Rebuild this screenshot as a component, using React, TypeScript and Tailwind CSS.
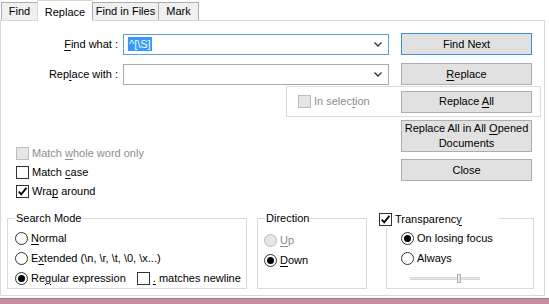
import React from 'react';

const U = ({ children }: { children: React.ReactNode }) => (
  <span className="underline underline-offset-[2px] decoration-[1px]">{children}</span>
);

function Check({ checked, disabled }: { checked?: boolean; disabled?: boolean }) {
  return (
    <span
      className={`w-[13px] h-[13px] border flex items-center justify-center shrink-0 ${
        disabled ? 'border-[#bcbcbc] bg-[#e6e6e6]' : 'border-[#333333] bg-white'
      }`}
    >
      {checked && (
        <svg width="11" height="11" viewBox="0 0 11 11">
          <path d="M1.8 5.6 L4.2 8.3 L9.4 1.9" fill="none" stroke="#000" strokeWidth="1.8" />
        </svg>
      )}
    </span>
  );
}

function Radio({ checked, disabled }: { checked?: boolean; disabled?: boolean }) {
  return (
    <span
      className={`w-[13px] h-[13px] rounded-full border flex items-center justify-center shrink-0 ${
        disabled ? 'border-[#bcbcbc] bg-[#e6e6e6]' : 'border-[#333333] bg-white'
      }`}
    >
      {checked && <span className="w-[7px] h-[7px] rounded-full bg-black" />}
    </span>
  );
}

function Btn({ children, primary, h = 'h-[22px]' }: { children: React.ReactNode; primary?: boolean; h?: string }) {
  return (
    <div
      className={`w-[131px] ${h} border ${
        primary ? 'border-[#3d8fd6]' : 'border-[#adadad]'
      } bg-[#e1e1e1] flex items-center justify-center text-center leading-[15px]`}
    >
      <div>{children}</div>
    </div>
  );
}

function Combo({ focused, children }: { focused?: boolean; children?: React.ReactNode }) {
  return (
    <div
      className={`w-[266px] h-[21px] border ${
        focused ? 'border-[#5a9de0]' : 'border-[#a9a9a9]'
      } bg-white flex items-center pl-[4px] pr-[6px]`}
    >
      <div className="flex-1">{children}</div>
      <svg width="8" height="5" viewBox="0 0 8 5">
        <path d="M0.5 0.5 L4 4 L7.5 0.5" fill="none" stroke="#333" strokeWidth="1.3" />
      </svg>
    </div>
  );
}

function Group({ title, className, children }: { title?: string; className: string; children: React.ReactNode }) {
  return (
    <div className={`relative border border-[#dcdcdc] h-[71px] ${className}`}>
      {title && <span className="absolute -top-[8px] left-[7px] bg-white px-[1px] leading-[14px]">{title}</span>}
      {children}
    </div>
  );
}

const Row = ({ children, className = '' }: { children: React.ReactNode; className?: string }) => (
  <div className={`h-[20px] flex items-center gap-[3px] ${className}`}>{children}</div>
);

export default function App() {
  return (
    <div
      className="w-[549px] h-[304px] bg-white flex flex-col overflow-hidden text-[11px] text-black"
      style={{ fontFamily: '"Liberation Sans", Arial, sans-serif' }}
    >
      {/* Tabs */}
      <div className="h-[20px] flex items-end pl-[1px] relative z-10">
        <div className="w-[37px] h-[18px] border border-b-0 border-[#acacac] bg-[#f0f0f0] flex items-center justify-center">Find</div>
        <div className="w-[56px] h-[21px] -mb-px -ml-px border border-b-0 border-[#d9d9d9] bg-white flex items-start pt-[3px] justify-center">Replace</div>
        <div className="w-[67px] h-[18px] -ml-px border border-b-0 border-[#acacac] bg-[#f0f0f0] flex items-center justify-center">Find in Files</div>
        <div className="w-[41px] h-[18px] -ml-px border border-b-0 border-[#acacac] bg-[#f0f0f0] flex items-center justify-center">Mark</div>
      </div>

      {/* Panel */}
      <div className="w-[545px] h-[276px] border border-[#d9d9d9] flex flex-col">
        <div className="mt-[12px] flex items-center">
          <div className="w-[117px] text-right">
            <U>F</U>ind what :
          </div>
          <div className="ml-[5px]">
            <Combo focused>
              <span className="bg-[#3399ff] text-white px-[1px] py-[1px]">^[\S]</span>
            </Combo>
          </div>
          <div className="ml-[12px]">
            <Btn primary>Find Next</Btn>
          </div>
        </div>

        <div className="mt-[8px] flex items-center">
          <div className="w-[117px] text-right">
            Rep<U>l</U>ace with :
          </div>
          <div className="ml-[5px]">
            <Combo />
          </div>
          <div className="ml-[12px]">
            <Btn>
              <U>R</U>eplace
            </Btn>
          </div>
        </div>

        <div className="mt-[1px] ml-[285px] w-[255px] h-[31px] border border-[#dcdcdc] flex items-center">
          <div className="w-[114px] pl-[11px] flex items-center gap-[3px] text-[#8d8d8d]">
            <Check disabled />
            <span>
              In selec<U>t</U>ion
            </span>
          </div>
          <Btn>
            Replace <U>A</U>ll
          </Btn>
        </div>

        <div className="mt-[3px] flex">
          <div className="w-[400px] pl-[15px] pt-[24px]">
            <div className="h-[19px] flex items-center gap-[3px] text-[#8d8d8d]">
              <Check disabled />
              <span>
                Match <U>w</U>hole word only
              </span>
            </div>
            <div className="h-[19px] flex items-center gap-[3px]">
              <Check />
              <span>
                Match <U>c</U>ase
              </span>
            </div>
            <div className="h-[19px] flex items-center gap-[3px]">
              <Check checked />
              <span>
                Wra<U>p</U> around
              </span>
            </div>
          </div>
          <div className="flex flex-col gap-[7px]">
            <Btn h="h-[32px]">
              Replace All in All <U>O</U>pened
              <br />
              Documents
            </Btn>
            <Btn>Close</Btn>
          </div>
        </div>

        <div className="mt-[17px] flex">
          <Group title="Search Mode" className="ml-[6px] w-[240px] pl-[7px] pt-[9px]">
            <Row>
              <Radio />
              <span>
                <U>N</U>ormal
              </span>
            </Row>
            <Row>
              <Radio />
              <span>
                E<U>x</U>tended (\n, \r, \t, \0, \x...)
              </span>
            </Row>
            <Row>
              <Radio checked />
              <span>
                Re<U>g</U>ular expression
              </span>
              <span className="ml-[8px]">
                <Check />
              </span>
              <span>
                <U>.</U> matches newline
              </span>
            </Row>
          </Group>

          <Group title="Direction" className="ml-[10px] w-[110px] pl-[6px] pt-[11px]">
            <Row className="text-[#8d8d8d]">
              <Radio disabled />
              <span>
                <U>U</U>p
              </span>
            </Row>
            <Row>
              <Radio checked />
              <span>
                <U>D</U>own
              </span>
            </Row>
          </Group>

          <Group className="ml-[19px] w-[148px] pl-[14px] pt-[9px]">
            <div className="absolute -top-[9px] -left-[8px] bg-white pr-[37px] flex items-center gap-[3px] h-[18px]">
              <Check checked />
              <span>
                Transparenc<U>y</U>
              </span>
            </div>
            <Row>
              <Radio checked />
              <span>On losing focus</span>
            </Row>
            <Row>
              <Radio />
              <span>Always</span>
            </Row>
            <div className="h-[20px] flex items-center ml-[9px]">
              <div className="relative w-[70px] h-[3px] bg-[#e7e7e7] border-y border-[#d6d6d6]">
                <span className="absolute left-[47px] -top-[4px] w-[4px] h-[9px] bg-[#e7e7e7] border border-[#b5b5b5]" />
              </div>
            </div>
          </Group>
        </div>
      </div>

      <div className="mt-auto h-[6px] bg-[#c4909e] border-t border-[#a87080]" />
    </div>
  );
}
